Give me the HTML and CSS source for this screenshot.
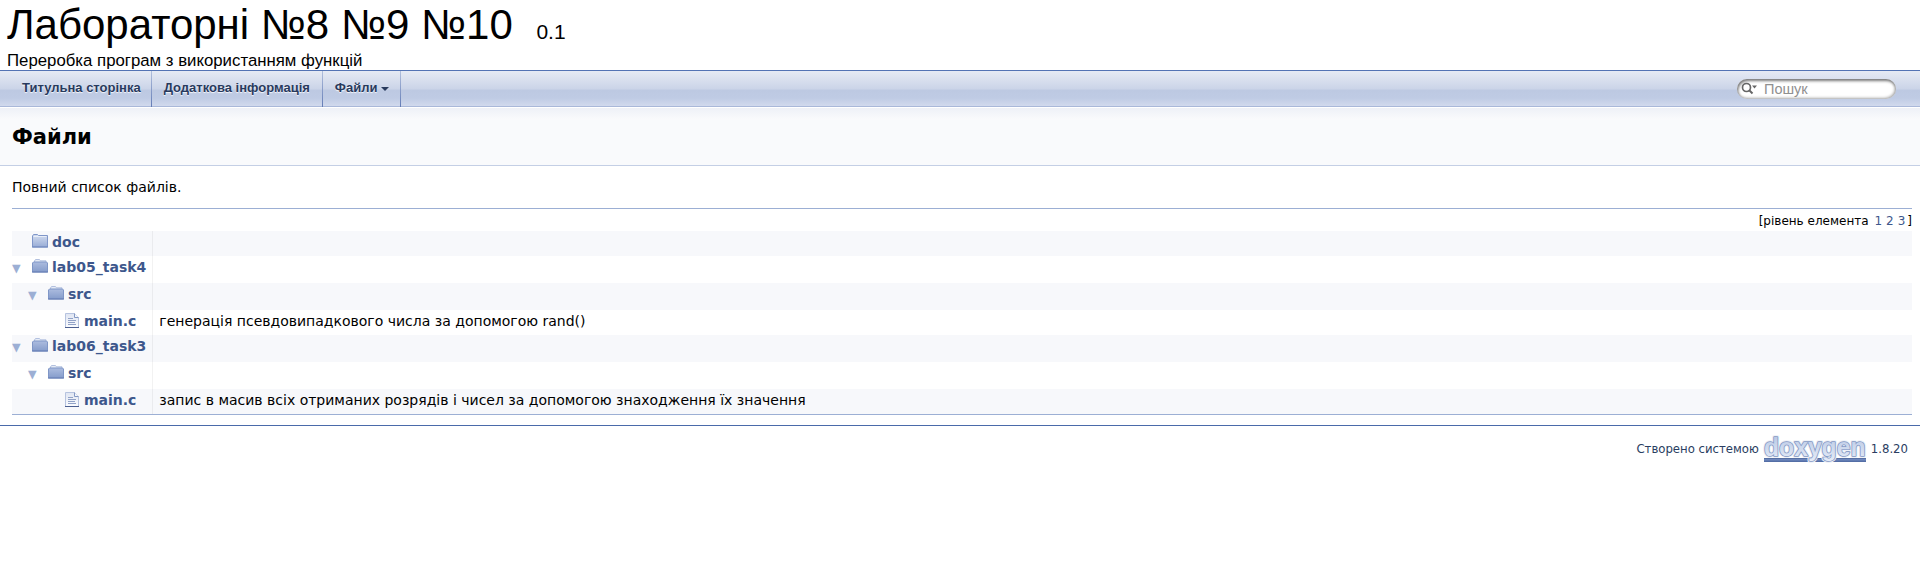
FILE: index.html
```html
<!DOCTYPE html>
<html lang="uk">
<head>
<meta charset="utf-8">
<title>Лабораторні №8 №9 №10: Файли</title>
<link rel="stylesheet" href="styles.css">
</head>
<body>
<svg width="0" height="0" class="defs">
  <defs>
    <linearGradient id="gClosed" x1="0" y1="0" x2="0" y2="1"><stop offset="0" stop-color="#d3ddf0"/><stop offset="1" stop-color="#98acd6"/></linearGradient>
    <linearGradient id="gOpen" x1="0" y1="0" x2="0" y2="1"><stop offset="0" stop-color="#acbcdf"/><stop offset="1" stop-color="#859ccb"/></linearGradient>
    <linearGradient id="gDoc" x1="0" y1="0" x2="0" y2="1"><stop offset="0" stop-color="#dfe5f2"/><stop offset="1" stop-color="#fbfcfe"/></linearGradient>
    <linearGradient id="gLogo" x1="0" y1="0" x2="0" y2="1"><stop offset="0" stop-color="#b4c4e2"/><stop offset="1" stop-color="#e6ecf7"/></linearGradient>
    <linearGradient id="gBar" x1="0" y1="0" x2="0" y2="1"><stop offset="0" stop-color="#4d6496"/><stop offset=".4" stop-color="#6f89bf"/><stop offset="1" stop-color="#4d679f"/></linearGradient>
    <symbol id="closed" viewBox="0 0 16 14"><path d="M.5 13V2L1.500.5H5.500L6.500 1.500H15.500V13Z" fill="url(#gClosed)" stroke="#7f96c9"/><path d="M1.500 2.500H14.500" stroke="#e8eef8"/><path d="M0 13H16" stroke="#6f87bd"/></symbol>
    <symbol id="open" viewBox="0 0 16 14"><path d="M2.500 5V2L3.500.5H7.500L8.500 1.800H14V5" fill="#e5ebf6" stroke="#b2c0df"/><path d="M.5 13V4L1.500 3H14.500L15.500 4V13Z" fill="url(#gOpen)" stroke="#7f96c7"/><path d="M0 13H16" stroke="#627bb2"/></symbol>
    <symbol id="file" viewBox="0 0 14 16"><path d="M.5.5H9.500L13.500 4.500V14.500H.5Z" fill="url(#gDoc)" stroke="#b6c3df"/><path d="M9.500.5V4.500H13.500" fill="#f5f7fb" stroke="#8499c4"/><path d="M0 14.500H14" stroke="#4c5f90"/><path d="M3 5.500H8M3 7.500H11M3 9.500H10M3 11.500H11" stroke="#91a2c7"/></symbol>
  </defs>
</svg>
<header class="title-area">
  <div class="project-name">Лабораторні №8 №9 №10 <span class="project-number">0.1</span></div>
  <div class="project-brief">Переробка програм з використанням функцій</div>
</header>
<nav class="main-nav">
  <a class="nav-item index">Титульна сторінка</a>
  <a class="nav-item pages">Додаткова інформація</a>
  <a class="nav-item">Файли<span class="sub-arrow"></span></a>
  <div class="search">
    <svg width="18" height="14" viewBox="0 0 18 14"><circle cx="5.500" cy="5.500" r="4" fill="none" stroke="#666" stroke-width="1.700"/><path d="M8.500 8.500L11.500 11.500" stroke="#666" stroke-width="2"/><path d="M11 3.500H16L13.500 6.500Z" fill="#666"/></svg>
    <span>Пошук</span>
  </div>
</nav>
<div class="header"><div class="title">Файли</div></div>
<main class="contents">
  <p class="intro">Повний список файлів.</p>
  <div class="directory">
    <div class="levels">[рівень елемента <span class="level-links"><a>1</a><a>2</a><a>3</a></span>]</div>
    <div class="row even short"><div class="entry"><svg class="folder first"><use href="#closed"/></svg><b>doc</b></div><div class="desc"></div></div>
    <div class="row"><div class="entry"><span class="arrow">▼</span><svg class="folder"><use href="#open"/></svg><b>lab05_task4</b></div><div class="desc"></div></div>
    <div class="row even"><div class="entry level1"><span class="arrow">▼</span><svg class="folder"><use href="#open"/></svg><b>src</b></div><div class="desc"></div></div>
    <div class="row short"><div class="entry level3"><svg class="file"><use href="#file"/></svg><b>main.c</b></div><div class="desc">генерація псевдовипадкового числа за допомогою rand()</div></div>
    <div class="row even"><div class="entry"><span class="arrow">▼</span><svg class="folder"><use href="#open"/></svg><b>lab06_task3</b></div><div class="desc"></div></div>
    <div class="row"><div class="entry level1"><span class="arrow">▼</span><svg class="folder"><use href="#open"/></svg><b>src</b></div><div class="desc"></div></div>
    <div class="row even short"><div class="entry level3"><svg class="file"><use href="#file"/></svg><b>main.c</b></div><div class="desc">запис в масив всіх отриманих розрядів і чисел за допомогою знаходження їх значення</div></div>
  </div>
</main>
<footer class="footer">
  <span>Створено системою</span>
  <svg class="logo" width="104" height="28" viewBox="0 0 104 28">
    <rect x="1" y="21" width="102" height="4" fill="url(#gBar)"/>
    <text x="1" y="19" textLength="101.500" lengthAdjust="spacingAndGlyphs" class="logo-halo">doxygen</text>
    <text x="1" y="19" textLength="101.500" lengthAdjust="spacingAndGlyphs" class="logo-text">doxygen</text>
  </svg>
  <span>1.8.20</span>
</footer>
</body>
</html>
```
FILE: styles.css
```css
body { margin: 0; background: #fff; color: #000; font: 14px/22px "DejaVu Sans", sans-serif; }
.defs { position: absolute; }
.title-area { box-sizing: border-box; height: 71px; padding-left: 7px; border-bottom: 1px solid #5373b4; font-family: "Liberation Sans", Arial, sans-serif; }
.project-name { height: 50px; font-size: 42px; line-height: 49px; }
.project-number { margin-left: 12px; font-size: 21px; }
.project-brief { font-size: 16.8px; line-height: 22px; }
.main-nav { display: flex; box-sizing: border-box; height: 36px; padding-left: 10px; box-shadow: inset 0 -1px #a9b8d9; background: linear-gradient(#e6eaf4, #cbd4e8 50%, #bdc9e2 53%, #bfcbe4 75%, #d3dbee); font: bold 13px/34px "Liberation Sans", Arial, sans-serif; color: #283a5d; text-shadow: 0 1px 1px rgba(255,255,255,.9); }
.nav-item { display: flex; padding: 0 11px 0 12px; border-right: 1px solid; border-image: linear-gradient(#b3c1de, #6079b4) 1; }
.nav-item.index { padding-right: 10px; }
.nav-item.pages { padding-right: 12px; }
.sub-arrow { margin: 16px 0 0 4px; width: 0; height: 0; border: 4px solid transparent; border-top-color: #283a5d; border-bottom: 0; }
.search { display: flex; align-items: center; box-sizing: border-box; width: 159px; height: 20px; margin: 8px 24px 0 auto; padding-left: 4px; gap: 5px; border-radius: 10px; background: #fff; box-shadow: inset 1px 2px 3px #777, inset -1px -1px 3px #aaa; font: 14.500px/20px "Liberation Sans", Arial, sans-serif; color: #909090; text-shadow: none; }
.header { box-sizing: border-box; height: 59px; padding: 18px 12px 0; border-bottom: 1px solid #c4cfe5; background: linear-gradient(#fff 0 1px, #eef1f7 1px, #f9fafc 12px); }
.title { font-size: 21px; line-height: 24px; font-weight: bold; }
.contents { padding: 0 8px 0 12px; }
.intro { margin: 0; padding-top: 10px; height: 32px; border-bottom: 1px solid #9cafd4; }
.directory { border-bottom: 1px solid #9cafd4; }
.levels { display: flex; justify-content: flex-end; height: 22px; font-size: 12px; line-height: 24px; white-space: pre; }
.level-links { display: flex; gap: 4px; padding: 0 2px; color: #3d578c; }
.row { display: flex; height: 27px; }
.row.short { height: 25px; }
.row.even { background: #f7f8fb; }
.entry { display: flex; align-items: flex-start; box-sizing: border-box; width: 140px; color: #3d578c; line-height: 22px; }
.level1 { padding-left: 16px; }
.level3 { padding-left: 53px; }
.arrow { width: 20px; font: 11.200px/26px "DejaVu Sans", sans-serif; color: #9cafd4; }
.folder { width: 16px; height: 14px; margin: 3px 4px 0 0; }
.folder.first { margin-left: 20px; }
.file { width: 14px; height: 16px; margin: 3px 5px 0 0; }
.desc { flex: 1; padding-left: 6.3px; border-left: 1px solid rgba(0,0,0,.05); }
.footer { display: flex; justify-content: flex-end; align-items: flex-start; gap: 4px; margin-top: 10px; padding-right: 12px; border-top: 1px solid #4a6aaa; font-size: 11.7px; line-height: 46px; color: #2a3d61; }
.logo { margin-top: 11px; overflow: visible; }
.logo-text, .logo-halo { font: bold 25px "Liberation Sans", Arial, sans-serif; stroke-linejoin: round; }
.logo-text { fill: url(#gLogo); stroke: #8398c4; stroke-width: 1.6px; paint-order: stroke; }
.logo-halo { fill: #fff; stroke: #eef1f7; stroke-width: 3.5px; }
```
